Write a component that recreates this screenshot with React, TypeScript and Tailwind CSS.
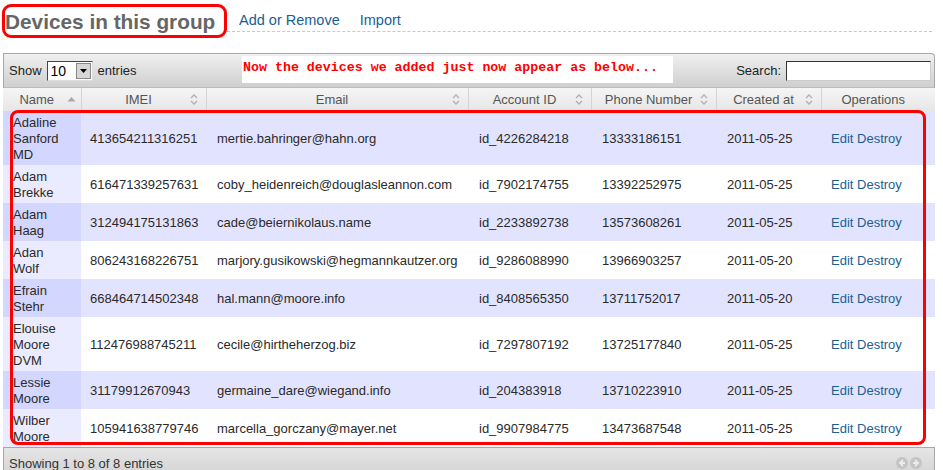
import React from "react";

const rows = [
  ["Adaline Sanford MD", "413654211316251", "mertie.bahringer@hahn.org", "id_4226284218", "13333186151", "2011-05-25"],
  ["Adam Brekke", "616471339257631", "coby_heidenreich@douglasleannon.com", "id_7902174755", "13392252975", "2011-05-25"],
  ["Adam Haag", "312494175131863", "cade@beiernikolaus.name", "id_2233892738", "13573608261", "2011-05-25"],
  ["Adan Wolf", "806243168226751", "marjory.gusikowski@hegmannkautzer.org", "id_9286088990", "13966903257", "2011-05-20"],
  ["Efrain Stehr", "668464714502348", "hal.mann@moore.info", "id_8408565350", "13711752017", "2011-05-20"],
  ["Elouise Moore DVM", "112476988745211", "cecile@hirtheherzog.biz", "id_7297807192", "13725177840", "2011-05-25"],
  ["Lessie Moore", "31179912670943", "germaine_dare@wiegand.info", "id_204383918", "13710223910", "2011-05-25"],
  ["Wilber Moore", "105941638779746", "marcella_gorczany@mayer.net", "id_9907984775", "13473687548", "2011-05-25"],
];

const cols = [
  { name: "Name", w: 78 },
  { name: "IMEI", w: 125 },
  { name: "Email", w: 262 },
  { name: "Account ID", w: 123 },
  { name: "Phone Number", w: 125 },
  { name: "Created at", w: 105 },
  { name: "Operations", w: 114 },
];

function SortBoth() {
  return (
    <svg width="8" height="11" viewBox="0 0 8 11" className="absolute right-[8px] top-[6px]">
      <path d="M1 4 L4 1 L7 4" fill="none" stroke="#b0b0b0" strokeWidth="1.3" />
      <path d="M1 7 L4 10 L7 7" fill="none" stroke="#b0b0b0" strokeWidth="1.3" />
    </svg>
  );
}

function SortAsc() {
  return (
    <svg width="9" height="6" viewBox="0 0 9 6" className="absolute right-[5px] top-[8px]">
      <path d="M0.5 5.5 L4.5 1 L8.5 5.5 Z" fill="#a8a8a8" />
    </svg>
  );
}

export default function App() {
  return (
    <div className="w-[943px] h-[470px] bg-white overflow-hidden text-[#2a2a2a]" style={{ fontFamily: '"Liberation Sans", Arial, sans-serif' }}>
      {/* Title row */}
      <div className="flex h-[53px] pt-[4px] pl-[2px]">
        <div className="w-[225px] h-[34px] border-[3px] border-[#ff0000] rounded-[9px] bg-white">
          <h2 className="text-[20.8px] font-bold text-[#666] leading-[24px] mt-[3px] whitespace-nowrap">Devices in this group</h2>
        </div>
        <div className="w-[705px] h-[28px] border-b border-dashed border-[#c8c8c8] flex items-end pb-[3px] pl-[12px] gap-[20px] text-[14.5px] leading-[16px] text-[#1a5f91]">
          <span>Add or Remove</span>
          <span>Import</span>
        </div>
      </div>

      {/* Table wrapper */}
      <div className="relative ml-[3px] w-[932px]">
        {/* toolbar */}
        <div className="relative h-[35px] border border-[#a8a8a8] border-b-[#bcbcbc] rounded-tr-[4px] bg-gradient-to-b from-[#f0f0f0] to-[#cfcfcf] flex items-center justify-between pl-[5px] pr-[3px] text-[13px] text-[#222]">
          <div className="flex items-center gap-[5px]">
            <span>Show</span>
            <div className="flex h-[20px] w-[46px] bg-white border border-t-[#444] border-l-[#444] border-r-[#ddd] border-b-[#ddd]">
              <span className="flex-1 pl-[3px] text-[14px] leading-[18px] text-black">10</span>
              <div className="w-[15px] h-[16px] mt-[1px] mr-[1px] bg-[#d6d6d6] border border-[#888] flex items-center justify-center">
                <svg width="7" height="4" viewBox="0 0 7 4"><path d="M0 0 H7 L3.5 4 Z" fill="#000" /></svg>
              </div>
            </div>
            <span>entries</span>
          </div>
          <div className="flex items-center gap-[5px]">
            <span>Search:</span>
            <div className="w-[145px] h-[20px] bg-white border border-t-[#333] border-l-[#333] border-r-[#ccc] border-b-[#ccc]" />
          </div>
          <div className="absolute left-[238px] top-[2px] w-[431px] h-[27px] bg-white pl-[1px] pt-[1px]">
            <span className="text-[13.3px] leading-[14px] font-bold text-[#ff0000]" style={{ fontFamily: '"Liberation Mono", "Courier New", monospace' }}>
              Now the devices we added just now appear as below...
            </span>
          </div>
        </div>

        {/* table */}
        <table className="table-fixed border-collapse w-[932px] text-[13px] leading-[16px]">
          <colgroup>
            {cols.map((c) => (
              <col key={c.name} style={{ width: c.w }} />
            ))}
          </colgroup>
          <thead>
            <tr className="h-[23px] bg-gradient-to-b from-[#f5f5f5] to-[#e6e6e6]">
              {cols.map((c, i) => (
                <th
                  key={c.name}
                  className={`relative font-normal text-[13px] text-[#555] text-center pl-[6px] pr-[16px] leading-[20px] ${i < cols.length - 1 ? "border-r border-[#d4d4d4]" : ""}`}
                >
                  {c.name}
                  {i === 0 ? <SortAsc /> : i < cols.length - 1 ? <SortBoth /> : null}
                </th>
              ))}
            </tr>
          </thead>
          <tbody>
            {rows.map((r, ri) => {
              const odd = ri % 2 === 0;
              return (
                <tr key={ri} className={`h-[38px] ${odd ? "bg-[#e2e4ff]" : "bg-white"}`}>
                  <td className={`px-[10px] pt-[4px] pb-[2px] ${odd ? "bg-[#d3d6ff]" : "bg-[#eaebff]"}`}>{r[0]}</td>
                  <td className="px-[9px] pt-[4px] pb-[2px]">{r[1]}</td>
                  <td className="px-[11px] pt-[4px] pb-[2px] whitespace-nowrap">{r[2]}</td>
                  <td className="px-[11px] pt-[4px] pb-[2px]">{r[3]}</td>
                  <td className="px-[11px] pt-[4px] pb-[2px]">{r[4]}</td>
                  <td className="px-[11px] pt-[4px] pb-[2px]">{r[5]}</td>
                  <td className="px-[10px] pt-[4px] pb-[2px] text-[#1a5f91] whitespace-nowrap">Edit Destroy</td>
                </tr>
              );
            })}
          </tbody>
        </table>

        {/* footer */}
        <div className="h-[30px] border-t border-l border-r border-[#a8a8a8] bg-gradient-to-b from-[#e6e6e6] to-[#d2d2d2] flex items-start justify-between pl-[5px] pr-[12px] pt-[6px] text-[13px] text-[#333]">
          <span>Showing 1 to 8 of 8 entries</span>
          <div className="flex gap-[2px] mt-[3px]">
            {["M7 3 L4 6 L7 9 M4 6 H9", "M5 3 L8 6 L5 9 M8 6 H3"].map((d, i) => (
              <svg key={i} width="12" height="12" viewBox="0 0 12 12">
                <circle cx="6" cy="6" r="6" fill="#c4c4c4" />
                <path d={d} fill="none" stroke="#ececec" strokeWidth="1.8" />
              </svg>
            ))}
          </div>
        </div>

        {/* red annotation box */}
        <div className="absolute left-[7px] top-[57px] w-[916px] h-[335px] border-[3px] border-[#ff0000] rounded-[8px] pointer-events-none" />
      </div>
    </div>
  );
}
